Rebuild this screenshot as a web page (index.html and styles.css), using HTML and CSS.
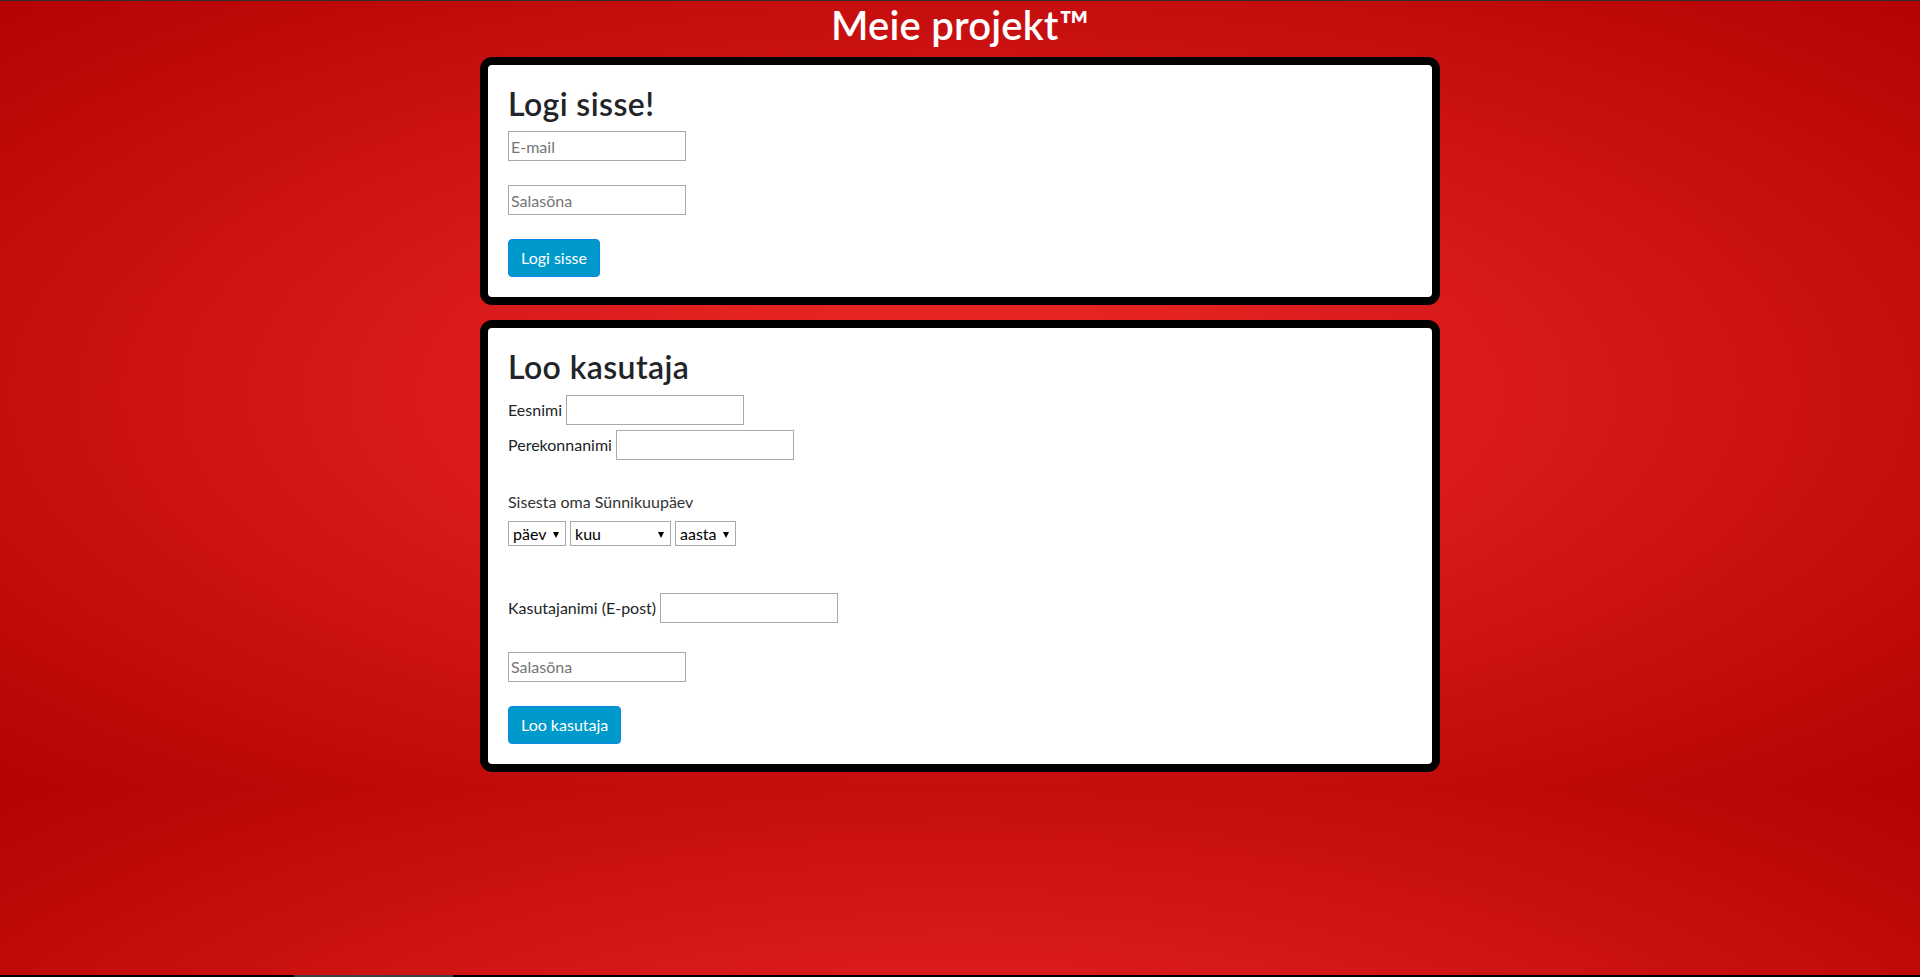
FILE: index.html
```html
<!DOCTYPE html>
<html lang="et">
<head>
<meta charset="utf-8">
<title>Meie projekt</title>
<link rel="stylesheet" href="styles.css">
</head>
<body>
<h1 class="site-title">Meie projekt™</h1>
<main class="wrap">
  <section class="card login">
    <h2 class="card-title">Logi sisse!</h2>
    <form class="stack">
      <input class="field" type="email" placeholder="E-mail">
      <input class="field" type="password" placeholder="Salasõna">
      <button class="btn" type="button">Logi sisse</button>
    </form>
  </section>
  <section class="card register">
    <h2 class="card-title">Loo kasutaja</h2>
    <form class="reg-form">
      <div class="row"><label class="lbl">Eesnimi</label><input class="field" type="text"></div>
      <div class="row"><label class="lbl">Perekonnanimi</label><input class="field" type="text"></div>
      <p class="dob-label">Sisesta oma Sünnikuupäev</p>
      <div class="dob">
        <span class="sel sel-day"><select class="select"><option>päev</option></select></span>
        <span class="sel sel-month"><select class="select"><option>kuu</option></select></span>
        <span class="sel sel-year"><select class="select"><option>aasta</option></select></span>
      </div>
      <div class="row row-user"><label class="lbl">Kasutajanimi (E-post)</label><input class="field" type="email"></div>
      <input class="field pass" type="password" placeholder="Salasõna">
      <button class="btn btn-reg" type="button">Loo kasutaja</button>
    </form>
  </section>
</main>
<div class="bottom-bar"><span class="bottom-seg"></span></div>
</body>
</html>
```

FILE: styles.css
```css
html {
  border-top: 1px solid #2e2e2e;
  min-height: 100%;
  background: radial-gradient(ellipse farthest-corner at center, #f02a2a 0%, #b40202 100%) 0 0 / 100% 787px repeat;
}
body {
  margin: 0;
  font-family: "Segoe UI", Lato, sans-serif;
  font-size: 16px;
  line-height: 1.5;
  color: #212529;
}
.site-title {
  margin: 0 0 8px;
  font-size: 40px;
  line-height: 48px;
  font-weight: 600;
  letter-spacing: 0.2px;
  color: #fff;
  text-align: center;
}
.wrap {
  width: 960px;
  margin: 0 auto;
  display: flex;
  flex-direction: column;
  gap: 15px;
}
.card {
  background: #fff;
  border: 8px solid #000;
  border-radius: 12px;
  padding: 20px;
}
.card-title {
  margin: 0 0 8px;
  font-size: 32px;
  line-height: 38.4px;
  font-weight: 600;
  letter-spacing: 0.4px;
}
.stack {
  display: flex;
  flex-direction: column;
  align-items: flex-start;
  gap: 24px;
}
.field {
  box-sizing: border-box;
  width: 178px;
  height: 30px;
  margin: 0;
  padding: 1px 2px;
  border: 1px solid #a9a9a9;
  border-radius: 0;
  font: inherit;
  color: #212529;
  background: #fff;
}
.field::placeholder { color: #757575; }
.btn {
  margin: 0;
  padding: 6px 12px;
  border: 1px solid #1185e6;
  border-radius: 4px;
  background: #0099cc;
  color: #fff;
  font: inherit;
  line-height: 24px;
}
.reg-form {
  display: flex;
  flex-direction: column;
  align-items: flex-start;
}
.row {
  display: flex;
  align-items: baseline;
  gap: 4px;
  height: 35px;
}
.lbl { line-height: 24px; }
.dob-label {
  margin: 25px 0 7px;
  line-height: 24px;
  color: #333;
}
.dob {
  display: flex;
  gap: 4px;
  height: 25px;
}
.sel {
  position: relative;
  display: block;
}
.sel::after {
  content: "";
  position: absolute;
  right: 7px;
  top: 11px;
  border-left: 3.5px solid transparent;
  border-right: 3.5px solid transparent;
  border-top: 6px solid #000;
  pointer-events: none;
}
.select {
  appearance: none;
  -webkit-appearance: none;
  box-sizing: border-box;
  height: 25px;
  margin: 0;
  padding: 0 0 0 4px;
  border: 1px solid #a9a9a9;
  border-radius: 0;
  background: #fff;
  font: inherit;
  line-height: 23px;
  color: #000;
}
.sel-day .select { width: 58px; }
.sel-month .select { width: 101px; }
.sel-year .select { width: 61px; }
.row-user { margin-top: 47px; }
.pass { margin-top: 24px; }
.btn-reg { margin-top: 24px; }
.bottom-bar {
  position: fixed;
  left: 0;
  right: 0;
  bottom: 0;
  height: 2px;
  background: #000;
}
.bottom-seg {
  position: absolute;
  left: 294px;
  width: 159px;
  top: 0;
  bottom: 0;
  background: #3a3f44;
}
```
